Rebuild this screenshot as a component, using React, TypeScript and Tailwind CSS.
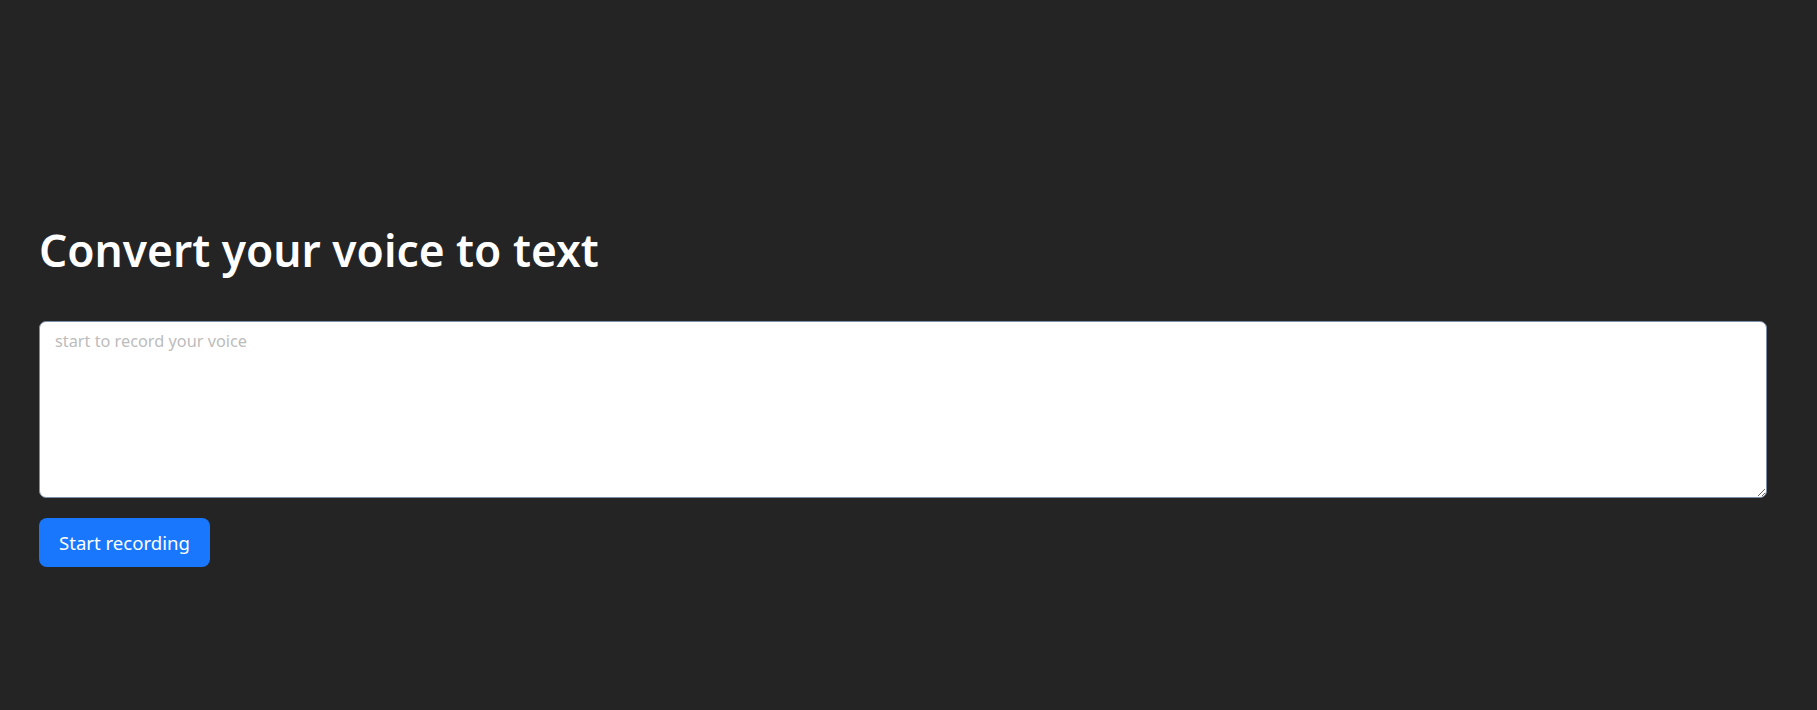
import { useState } from 'react';

export default function App() {
  const [text, setText] = useState('');
  const [recording, setRecording] = useState(false);

  return (
    <div className="min-h-[710px] bg-[#242424] pl-[39px] pr-[50px] pt-[222px] font-['Noto_Sans',sans-serif]">
      <h1 className="text-[44.3px] leading-[56px] font-semibold text-white">Convert your voice to text</h1>
      <textarea
        autoFocus
        value={text}
        onChange={(e) => setText(e.target.value)}
        placeholder="start to record your voice"
        className="mt-[43px] block w-full h-[177px] rounded-[7px] border border-[#7d8ea8] bg-white px-[15px] py-[6px] text-[16.3px] leading-[26px] text-[#212529] placeholder:text-[#bcbcbc] outline-none"
      />
      <button
        onClick={() => setRecording(!recording)}
        className="mt-[20px] h-[49px] w-[171px] rounded-[8px] bg-[#1877fd] text-[18.6px] text-white"
      >
        {recording ? 'Stop recording' : 'Start recording'}
      </button>
    </div>
  );
}
